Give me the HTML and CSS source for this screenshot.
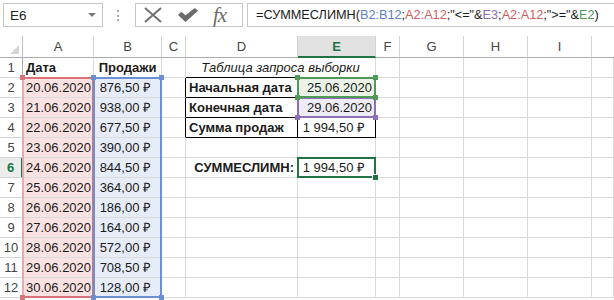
FILE: index.html
```html
<!DOCTYPE html>
<html lang="ru">
<head>
<meta charset="UTF-8">
<title>СУММЕСЛИМН</title>
<link rel="stylesheet" href="styles.css">
</head>
<body>

<div class="formula-bar">
  <div class="name-box"><span>E6</span><span class="caret"></span></div>
  <div class="grip"></div>
  <div class="fx-buttons">
    <svg width="20" height="16" viewBox="0 0 20 16"><path d="M2 1 L18 15 M18 1 L2 15" stroke="#707070" stroke-width="2" fill="none"/></svg>
    <svg width="20" height="14" viewBox="0 0 20 14"><polygon points="0,7 3.2,3.8 7.5,7.2 16.8,0 20,2.8 7.5,14" fill="#6b6b6b"/></svg>
    <span class="fx">fx</span>
  </div>
  <div class="formula">=СУММЕСЛИМН(<span class="f-blue">B2:B12</span>;<span class="f-red">A2:A12</span>;"&lt;="&amp;<span class="f-purple">E3</span>;<span class="f-red">A2:A12</span>;"&gt;="&amp;<span class="f-green">E2</span>)</div>
</div>

<div class="sheet">
  <div class="grid cells">
    <!-- заголовки -->
    <div class="corner"><span class="tri"></span></div>
    <div class="ch">A</div><div class="ch">B</div><div class="ch">C</div><div class="ch">D</div>
    <div class="ch ch-active">E</div><div class="ch">F</div><div class="ch">G</div><div class="ch">H</div><div class="ch">I</div><div class="ch ch-last"></div>

    <div class="rh">1</div>
    <div class="c b">Дата</div><div class="c b center">Продажи</div><div class="c"></div>
    <div class="c i center merged">Таблица запроса выборки</div>
    <div class="c"></div><div class="c"></div><div class="c"></div><div class="c"></div><div class="c"></div>

    <div class="rh">2</div>
    <div class="c date pink">20.06.2020</div><div class="c money blue">876,50 ₽</div><div class="c tbl-l"></div>
    <div class="c b tbl">Начальная дата</div><div class="c date tbl green-fill">25.06.2020</div>
    <div class="c"></div><div class="c"></div><div class="c"></div><div class="c"></div><div class="c"></div>

    <div class="rh">3</div>
    <div class="c date pink">21.06.2020</div><div class="c money blue">938,00 ₽</div><div class="c tbl-l"></div>
    <div class="c b tbl">Конечная дата</div><div class="c date tbl purple-fill">29.06.2020</div>
    <div class="c"></div><div class="c"></div><div class="c"></div><div class="c"></div><div class="c"></div>

    <div class="rh">4</div>
    <div class="c date pink">22.06.2020</div><div class="c money blue">677,50 ₽</div><div class="c tbl-l"></div>
    <div class="c b tbl">Сумма продаж</div><div class="c money tbl">1 994,50 ₽</div>
    <div class="c"></div><div class="c"></div><div class="c"></div><div class="c"></div><div class="c"></div>

    <div class="rh">5</div>
    <div class="c date pink">23.06.2020</div><div class="c money blue">390,00 ₽</div><div class="c"></div>
    <div class="c"></div><div class="c"></div>
    <div class="c"></div><div class="c"></div><div class="c"></div><div class="c"></div><div class="c"></div>

    <div class="rh rh-active">6</div>
    <div class="c date pink">24.06.2020</div><div class="c money blue">844,50 ₽</div><div class="c"></div>
    <div class="c b right">СУММЕСЛИМН:</div><div class="c money">1 994,50 ₽</div>
    <div class="c"></div><div class="c"></div><div class="c"></div><div class="c"></div><div class="c"></div>

    <div class="rh">7</div>
    <div class="c date pink">25.06.2020</div><div class="c money blue">364,00 ₽</div><div class="c"></div>
    <div class="c"></div><div class="c"></div>
    <div class="c"></div><div class="c"></div><div class="c"></div><div class="c"></div><div class="c"></div>

    <div class="rh">8</div>
    <div class="c date pink">26.06.2020</div><div class="c money blue">186,00 ₽</div><div class="c"></div>
    <div class="c"></div><div class="c"></div>
    <div class="c"></div><div class="c"></div><div class="c"></div><div class="c"></div><div class="c"></div>

    <div class="rh">9</div>
    <div class="c date pink">27.06.2020</div><div class="c money blue">164,00 ₽</div><div class="c"></div>
    <div class="c"></div><div class="c"></div>
    <div class="c"></div><div class="c"></div><div class="c"></div><div class="c"></div><div class="c"></div>

    <div class="rh">10</div>
    <div class="c date pink">28.06.2020</div><div class="c money blue">572,00 ₽</div><div class="c"></div>
    <div class="c"></div><div class="c"></div>
    <div class="c"></div><div class="c"></div><div class="c"></div><div class="c"></div><div class="c"></div>

    <div class="rh">11</div>
    <div class="c date pink">29.06.2020</div><div class="c money blue">708,50 ₽</div><div class="c"></div>
    <div class="c"></div><div class="c"></div>
    <div class="c"></div><div class="c"></div><div class="c"></div><div class="c"></div><div class="c"></div>

    <div class="rh">12</div>
    <div class="c date pink">30.06.2020</div><div class="c money blue">128,00 ₽</div><div class="c"></div>
    <div class="c"></div><div class="c"></div>
    <div class="c"></div><div class="c"></div><div class="c"></div><div class="c"></div><div class="c"></div>
  </div>

  <!-- рамки ссылок формулы и выделение -->
  <div class="grid marks">
    <div class="ref ref-a"><i class="h tl"></i><i class="h tr"></i><i class="h bl"></i><i class="h br"></i></div>
    <div class="ref ref-b"><i class="h tl"></i><i class="h tr"></i><i class="h bl"></i><i class="h br"></i></div>
    <div class="ref ref-e3"><i class="h tl"></i><i class="h tr"></i><i class="h bl"></i><i class="h br"></i></div>
    <div class="ref ref-e2"><i class="h tl"></i><i class="h tr"></i><i class="h bl"></i><i class="h br"></i></div>
    <div class="sel"><i class="fill-handle"></i></div>
  </div>
</div>

</body>
</html>
```

FILE: styles.css
```css
body {
  margin: 0;
  width: 614px;
  height: 300px;
  overflow: hidden;
  background: #fff;
  font-family: "Liberation Sans", Arial, sans-serif;
  color: #1b1b1b;
}

/* строка формул */
.formula-bar {
  display: flex;
  align-items: center;
  height: 36px;
  padding: 0 0 6px 3px;
  box-sizing: border-box;
}

.name-box {
  width: 100px;
  height: 24px;
  box-sizing: border-box;
  border: 1px solid #c6c6c6;
  display: flex;
  align-items: center;
  justify-content: space-between;
  padding: 0 6px 0 6px;
  font-size: 13.5px;
  color: #222;
}

.caret {
  width: 0;
  height: 0;
  border-left: 4px solid transparent;
  border-right: 4px solid transparent;
  border-top: 4px solid #7a7a7a;
}

.grip {
  width: 2px;
  height: 11px;
  margin: 0 14px 0 14px;
  border-left: 2px dotted #a8a8a8;
}

.fx-buttons {
  width: 108px;
  height: 24px;
  box-sizing: border-box;
  border: 1px solid #c6c6c6;
  display: flex;
  align-items: center;
  gap: 15px;
  padding-left: 7px;
}

.fx {
  font-family: "Liberation Serif", "Times New Roman", serif;
  font-style: italic;
  font-size: 21px;
  color: #6b6b6b;
  letter-spacing: -1px;
}

.formula {
  flex: 1;
  min-width: 0;
  height: 24px;
  margin-left: 4px;
  box-sizing: border-box;
  border: 1px solid #c6c6c6;
  border-right: none;
  padding-left: 8px;
  font-size: 12.7px;
  line-height: 22px;
  white-space: nowrap;
  overflow: hidden;
  color: #1b1b1b;
}

.f-blue { color: #5a7fcb; }
.f-red { color: #cf5e5e; }
.f-purple { color: #8a6bb4; }
.f-green { color: #4c9654; }

/* лист */
.sheet {
  display: grid;
}

.grid {
  grid-area: 1 / 1;
  display: grid;
  grid-template-columns: 23px 71px 68px 24px 112px 78px 24px 64px 64px 64px 1fr;
  grid-template-rows: 22px repeat(12, 20px);
}

.marks {
  pointer-events: none;
}

.corner {
  border-right: 1px solid #bdbdbd;
  border-bottom: 1px solid #ababab;
  display: flex;
  justify-content: flex-end;
  align-items: flex-end;
  padding: 0 3px 3px 0;
}

.tri {
  width: 0;
  height: 0;
  border-left: 9px solid transparent;
  border-bottom: 9px solid #d6d6d6;
}

.ch {
  border-right: 1px solid #d4d4d4;
  border-bottom: 1px solid #ababab;
  font-size: 13px;
  color: #444;
  text-align: center;
  line-height: 22px;
}

.ch-last {
  border-right: none;
}

.ch-active {
  background: #e1e1e1;
  color: #217346;
  font-weight: bold;
  border-bottom: 2px solid #217346;
  line-height: 21px;
}

.rh {
  border-right: 1px solid #ababab;
  border-bottom: 1px solid #d4d4d4;
  font-size: 13px;
  color: #444;
  text-align: center;
  line-height: 19px;
}

.rh-active {
  background: #ececec;
  color: #217346;
  font-weight: bold;
  border-right: 2px solid #217346;
}

.c {
  border-right: 1px solid #dadada;
  border-bottom: 1px solid #dadada;
  font-size: 13px;
  line-height: 19px;
  padding: 0 3px;
  white-space: nowrap;
  overflow: hidden;
}

.b { font-weight: bold; }
.i { font-style: italic; }
.center { text-align: center; }
.right { text-align: right; }
.date { text-align: right; }
.money { text-align: right; padding-right: 10px; }

.merged {
  grid-column: span 2;
  border-bottom-color: #000;
}

.tbl {
  border-right-color: #000;
  border-bottom-color: #000;
}

.tbl-l {
  border-right-color: #000;
}

.pink { background: #fbe2e2; }
.blue { background: #e7edf8; }
.green-fill { background: #ebf3e8; }
.purple-fill { background: #f0ecf5; }

/* рамки ссылок */
.ref {
  position: relative;
  margin: -1px 0 0 -1px;
  border: 2px solid;
}

.ref-a {
  grid-area: 3 / 2 / 14 / 3;
  border-color: #d8737a;
  border-left-color: #e9aaae;
  color: #d8737a;
}

.ref-b {
  grid-area: 3 / 3 / 14 / 4;
  border-color: #6a8fd3;
  color: #6a8fd3;
}

.ref-e3 {
  grid-area: 4 / 6 / 5 / 7;
  border-color: #8e70b8;
  color: #8e70b8;
}

.ref-e2 {
  grid-area: 3 / 6 / 4 / 7;
  border-color: #4f9b55;
  color: #4f9b55;
}

.h {
  position: absolute;
  width: 5px;
  height: 5px;
  background: currentColor;
}

.tl { left: -4px; top: -4px; }
.tr { right: -4px; top: -4px; }
.bl { left: -4px; bottom: -4px; }
.br { right: -4px; bottom: -4px; }

/* выделенная ячейка */
.sel {
  grid-area: 7 / 6 / 8 / 7;
  position: relative;
  margin: -1px 0 0 -1px;
  border: 2px solid #217346;
}

.fill-handle {
  position: absolute;
  right: -5px;
  bottom: -5px;
  width: 5px;
  height: 5px;
  background: #217346;
  border: 1px solid #fff;
}
```
